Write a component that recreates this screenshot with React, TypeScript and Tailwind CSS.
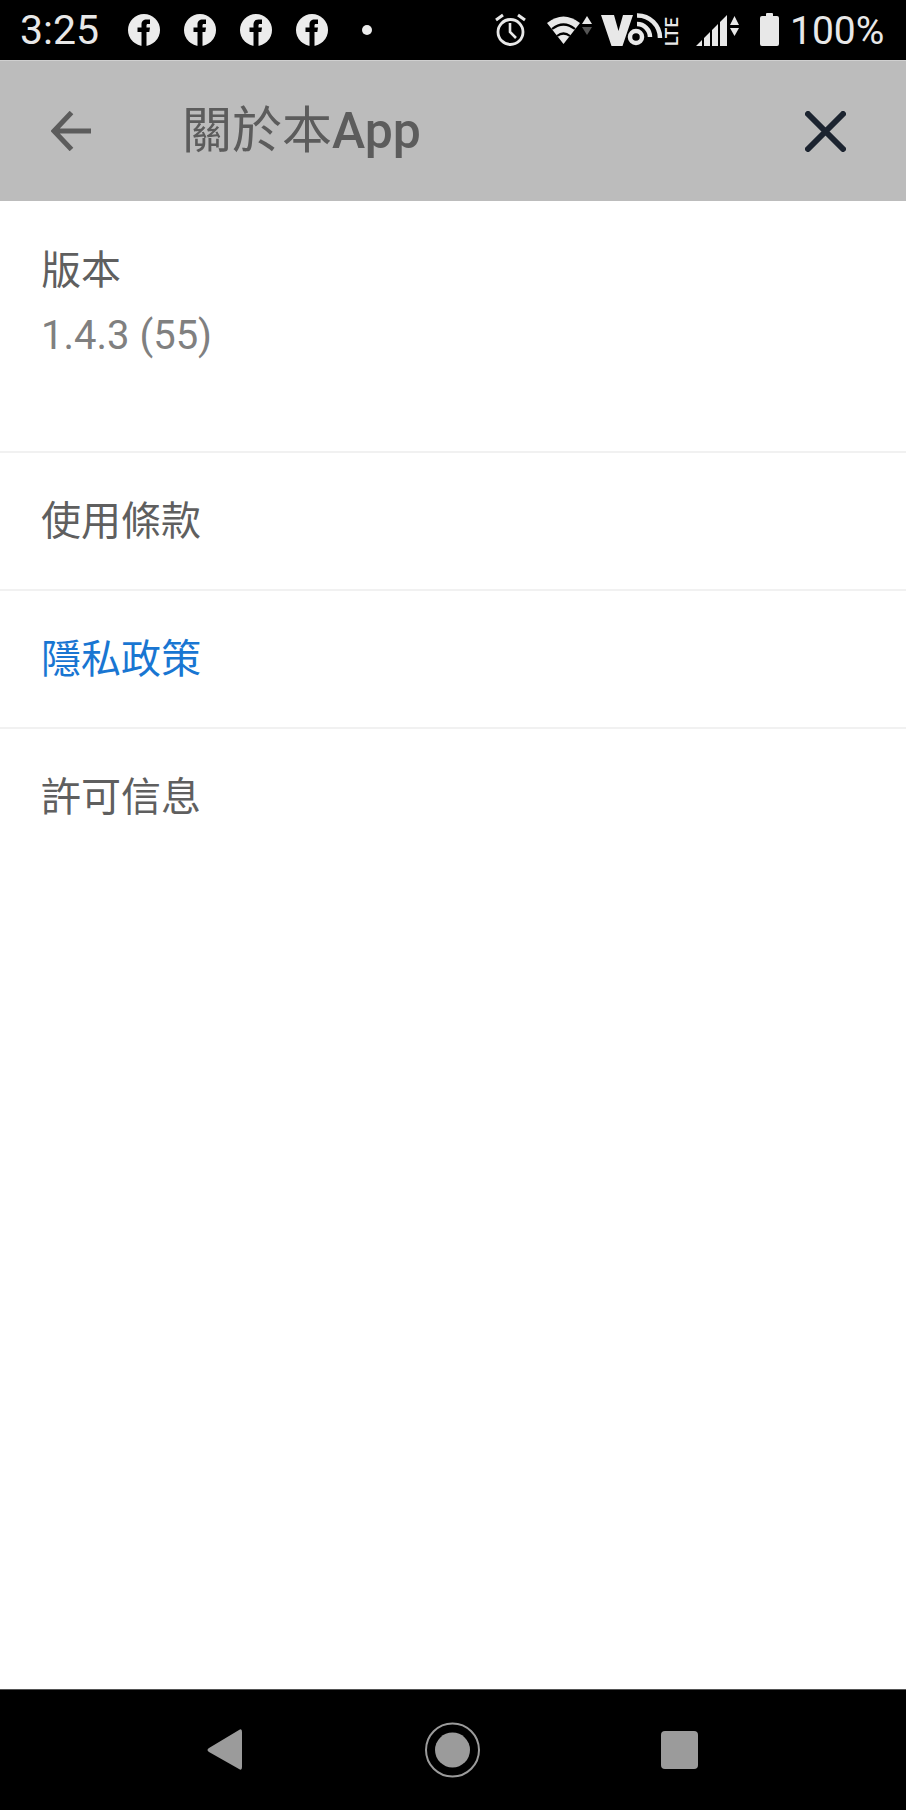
const FB = () => (
  <svg viewBox="0 0 32 32" className="w-8 h-8">
    <circle cx="16" cy="16" r="16" fill="#ececec" />
    <path d="M13.5 32V18H9.5V13.5H13.5V10.5C13.5 7 15.5 5.5 18.5 5.5H22V10H19.8C18.8 10 18.5 10.6 18.5 11.5V13.5H22L21.3 18H18.5V32Z" fill="#000" />
  </svg>
);

const StatusIcons = () => (
  <svg viewBox="490 0 295 60" className="w-[295px] h-[60px] shrink-0">
    <g fill="none" stroke="#e8e8e8">
      <circle cx="510.5" cy="32" r="12.5" strokeWidth="2.8" />
      <path d="M510 23V32L516 38" strokeWidth="2.6" />
      <path d="M496 20L503 15M518 15L525 20" strokeWidth="3" />
    </g>
    <path d="M547 23Q563.5 10 580 23L563.5 44Z" fill="#e8e8e8" />
    <path d="M552 29Q563.5 20 575 29M557 36Q563.5 31 570 36" fill="none" stroke="#000" strokeWidth="2.2" />
    <path d="M587 16L592 24H582Z" fill="#e8e8e8" />
    <path d="M582 27H592L587 35Z" fill="#555" />
    <path d="M601 15H614L618.5 31L623 15H633L622.5 46H611.5Z" fill="#e8e8e8" />
    <circle cx="636" cy="37" r="6" fill="none" stroke="#e8e8e8" strokeWidth="4.5" />
    <path d="M637 24A13 13 0 0 1 650 37M637 15.5A22.5 22.5 0 0 1 660 38" fill="none" stroke="#e8e8e8" strokeWidth="4.5" />
    <text x="0" y="0" transform="translate(678 46) rotate(-90)" fill="#e8e8e8" fontSize="18" fontWeight="500" fontFamily="Roboto, sans-serif">LTE</text>
    <path d="M696 46L702 40V46ZM704 46V38L710 32V46ZM712 46V30L718 24V46ZM720 46V22L727 15V46Z" fill="#e8e8e8" />
    <path d="M734.5 16L739 25H730ZM730 28H739L734.5 36Z" fill="#e8e8e8" />
    <path d="M766 16V14Q766 13 767 13H772Q773 13 773 14V16H777Q779 16 779 18V44Q779 46 777 46H762Q760 46 760 44V18Q760 16 762 16Z" fill="#e8e8e8" />
  </svg>
);

const Row = ({ children, color }: { children: string; color: string }) => (
  <div className={`h-[138px] pt-[2px] flex items-center px-[41px] border-b-2 border-[#f1f1f1] text-[40px] ${color}`}>
    {children}
  </div>
);

export default function App() {
  return (
    <div
      className="w-[906px] h-[1810px] flex flex-col bg-white overflow-hidden"
      style={{ fontFamily: 'Roboto, "Noto Sans CJK TC", sans-serif' }}
    >
      <div className="h-[60px] shrink-0 bg-black flex items-center justify-between pl-[20px] pr-[15px] text-[#e8e8e8]">
        <div className="flex items-center">
          <span className="w-[108px] text-[41px] pt-[2px]">3:25</span>
          <div className="flex items-center gap-6">
            <FB />
            <FB />
            <FB />
            <FB />
          </div>
          <span className="ml-[34px] w-[10px] h-[10px] rounded-full bg-[#ececec]" />
        </div>
        <div className="flex items-center">
          <StatusIcons />
          <span className="ml-[5px] w-[101px] text-[39px] pt-[2px]">100%</span>
        </div>
      </div>

      <div className="h-[141px] shrink-0 bg-[#bcbcbc] border-t border-[#d0d0d0] flex items-center pl-[51px] pr-[60px]">
        <svg viewBox="0 0 40 40" className="w-10 h-10" fill="none" stroke="#5c5c5c" strokeWidth="5">
          <path d="M40 20H4M20.5 1.5L3 20L20.5 38.5" />
        </svg>
        <div className="ml-[91px] text-[#5c5c5c] text-[50px] flex-1">
          關於本<span className="font-medium">App</span>
        </div>
        <svg viewBox="0 0 41 41" className="w-[41px] h-[41px]" fill="none" stroke="#1c2430" strokeWidth="6" strokeLinecap="round">
          <path d="M3 3L38 38M38 3L3 38" />
        </svg>
      </div>

      <div className="flex-1">
        <div className="h-[252px] pt-[37px] px-[41px] border-b-2 border-[#f1f1f1] text-[40px] leading-[65px]">
          <div className="text-[#5f5f5f]">版本</div>
          <div className="text-[#808080]">1.4.3 (55)</div>
        </div>
        <Row color="text-[#5f5f5f]">使用條款</Row>
        <Row color="text-[#1976d2]">隱私政策</Row>
        <div className="h-[138px] flex items-center px-[41px] text-[40px] text-[#5f5f5f]">許可信息</div>
      </div>

      <div className="h-[121px] shrink-0 bg-black border-t border-[#555]">
        <svg viewBox="0 1690 906 120" className="w-[906px] h-[120px]" fill="#9b9b9b">
          <path d="M239 1730Q242 1728 242 1732V1767Q242 1771 239 1769L209 1752Q206 1750 209 1748Z" />
          <circle cx="452.5" cy="1750" r="26.5" fill="none" stroke="#9b9b9b" strokeWidth="2" />
          <circle cx="452.5" cy="1750" r="17.5" />
          <rect x="661" y="1731" width="37" height="38" rx="4" />
        </svg>
      </div>
    </div>
  );
}
